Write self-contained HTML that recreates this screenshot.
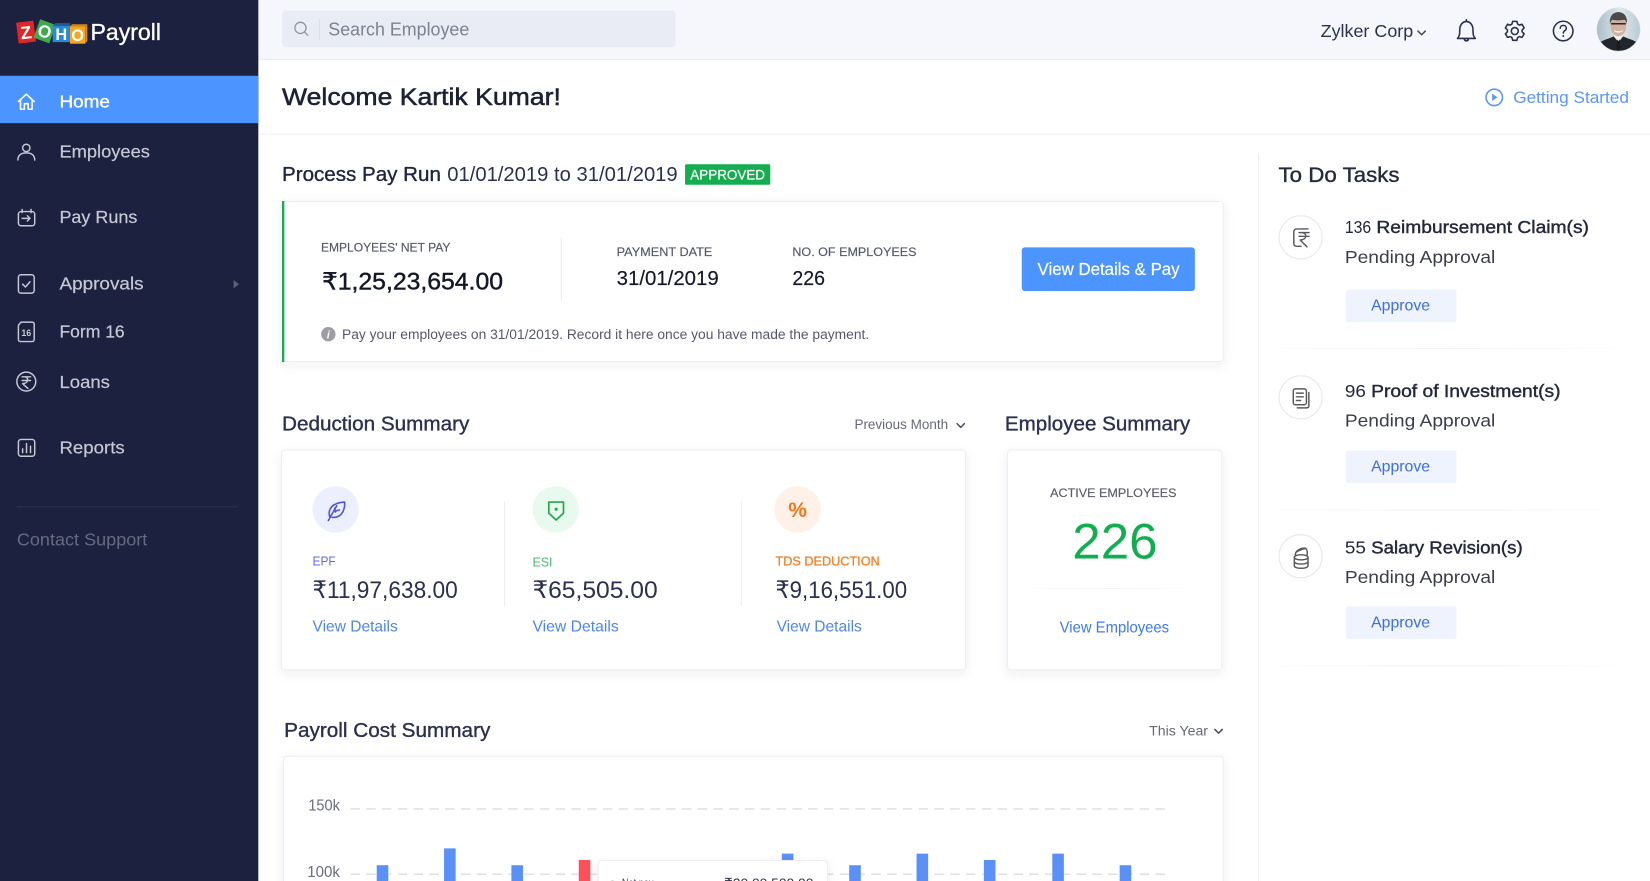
<!DOCTYPE html>
<html lang="en">
<head>
<meta charset="utf-8">
<title>Zoho Payroll</title>
<style>
html,body{margin:0;padding:0;background:#fff;width:1650px;height:881px;overflow:hidden}
svg{display:block;width:1650px;height:881px}
text{font-family:"Liberation Sans","DejaVu Sans",sans-serif;white-space:pre}
.nav{font-size:17px;fill:#c6c8d3;stroke:#c6c8d3;stroke-width:.2px}
.lbl{font-size:11.5px;fill:#55586a;stroke:#55586a;stroke-width:.15px}
.link{font-size:15px;fill:#4f86ea}
.ttl{font-size:17px;fill:#24283c}
.sec{font-size:19.5px;fill:#2b3050;stroke:#2b3050;stroke-width:.35px}
.amt{font-size:23px;fill:#2b3050}
.ap{font-size:15px;fill:#3f6fd8}
.ic{fill:none;stroke:#c6c8d3;stroke-width:1.4;stroke-linecap:round;stroke-linejoin:round}
.ti{fill:none;stroke:#5a5a5e;stroke-width:1.4;stroke-linecap:round;stroke-linejoin:round}
.hd{fill:none;stroke:#2b3050;stroke-width:1.5;stroke-linecap:round;stroke-linejoin:round}
.ch{fill:none;stroke:#44485a;stroke-width:1.4;stroke-linecap:round;stroke-linejoin:round}
</style>
</head>
<body>
<svg viewBox="0 0 1568 837" preserveAspectRatio="none" xmlns="http://www.w3.org/2000/svg">
<defs>
<filter id="sh" x="-5%" y="-10%" width="110%" height="125%"><feDropShadow dx="0" dy="3" stdDeviation="5" flood-color="#30385a" flood-opacity=".07"/></filter>
<linearGradient id="fade" x1="0" x2="1" y1="0" y2="0"><stop offset="0" stop-color="#f0f1f4" stop-opacity=".3"/><stop offset=".5" stop-color="#eff0f3"/><stop offset="1" stop-color="#f0f1f4" stop-opacity=".1"/></linearGradient>
<linearGradient id="av" x1="0" x2="1" y1="0" y2="0"><stop offset="0" stop-color="#a9bcc7"/><stop offset=".55" stop-color="#dfe8ec"/><stop offset="1" stop-color="#b9cad3"/></linearGradient>
<clipPath id="avc"><circle cx="1538" cy="28" r="20.6"/></clipPath>
</defs>
<rect width="1568" height="837" fill="#fff"/>

<!-- Top bar -->
<rect x="245" y="0" width="1323" height="56" fill="#f5f7fc"/>
<rect x="245" y="56" width="1323" height="1" fill="#eceef4"/>
<rect x="268" y="10" width="374" height="35" rx="4" fill="#e9ecf4"/>
<circle cx="285.500" cy="26.500" r="5.300" fill="none" stroke="#8d93a3" stroke-width="1.200"/>
<path d="M289.500 30.500l3 3" stroke="#8d93a3" stroke-width="1.200" stroke-linecap="round"/>
<rect x="303" y="18" width="1" height="20" fill="#d8dce6"/>
<text x="312" y="33.500" font-size="17.500" fill="#7d8290" textLength="134" lengthAdjust="spacingAndGlyphs">Search Employee</text>
<text x="1255" y="35" font-size="17" fill="#2b3050" textLength="88" lengthAdjust="spacingAndGlyphs">Zylker Corp</text>
<path class="ch" d="M1347.500 29.500l3.500 3.500 3.500-3.500"/>
<path class="hd" d="M1385 36.500c2-2 2.200-4 2.200-8 0-4.500 2.500-8 6.300-8s6.300 3.500 6.300 8c0 4 .2 6 2.200 8zM1391.500 36.800c.3 2.600 3.700 2.600 4 0M1393.500 20.500v-1.800"/>
<g class="hd" transform="translate(1439.500 29.500)">
<circle r="3.300"/>
<path d="M-2-9.200h4l.7 2.600 1.600.9 2.600-.7 2 3.400-1.900 1.900v1.800l1.900 1.900-2 3.400-2.600-.7-1.600.9-.7 2.600h-4l-.7-2.600-1.600-.9-2.600.7-2-3.400 1.900-1.900v-1.800l-1.900-1.900 2-3.400 2.600.7 1.600-.9z"/>
</g>
<circle class="hd" cx="1485.500" cy="29.500" r="9.300"/>
<path class="hd" d="M1482.700 26.800c0-3.600 5.800-3.600 5.800 0 0 2.200-2.900 2.400-2.900 4.600"/>
<circle cx="1485.600" cy="34.200" r=".9" fill="#2b3050"/>
<g clip-path="url(#avc)">
<rect x="1517" y="7" width="42" height="42" fill="url(#av)"/>
<path d="M1521 49v-9c3-2.500 9-3.500 12.500-5.500h9c3.500 2 9.500 3 12.500 5.500v9z" fill="#23252c"/>
<path d="M1533.500 34.500l4.500 5.500 4.500-5.500-1-2h-7z" fill="#f1f1f1"/>
<path d="M1536.800 37.500l1.200 1.500 1.200-1.500 1 9.500h-4.400z" fill="#1b1b20"/>
<ellipse cx="1538" cy="24.500" rx="7.500" ry="10" fill="#d3b3a0"/>
<path d="M1530 23c-1-7 2.500-11.500 8-11.500s9 4.500 8 11.500c-.6-2.500-1.400-3.800-2.400-4.200-3.600.8-7.600.8-11.200 0-1 .4-1.800 1.700-2.400 4.200z" fill="#4b4a4a"/>
<rect x="1531" y="21.800" width="14" height="1.500" fill="#2c2a2c"/>
<path d="M1533.500 28.500c3 1.500 6 1.500 9 0-.8 3.400-8.200 3.400-9 0z" fill="#f6f1ed"/>
</g>
<circle cx="1538" cy="28" r="20.600" fill="none" stroke="#d8dbe2" stroke-width=".5"/>

<!-- Sidebar -->
<rect x="0" y="0" width="245.500" height="837" fill="#1c2140"/>
<rect x="0" y="72" width="245.500" height="45" fill="#4c94ff"/>

<rect x="16.500" y="20.500" width="16.500" height="20" fill="#e42527" transform="rotate(-7 24.700 30.500)"/>
<text x="24.700" y="36.800" font-size="17" font-weight="700" fill="#fff" text-anchor="middle" transform="rotate(-7 24.700 30.500)">Z</text>
<rect x="34.500" y="20.500" width="16" height="18.500" fill="#3dab4b" transform="rotate(20 42.500 29.700)"/>
<text x="42.500" y="35.700" font-size="16.500" font-weight="700" fill="#fff" text-anchor="middle" transform="rotate(18 42.500 29.700)">O</text>
<rect x="50" y="24.500" width="16.500" height="15.500" fill="#2a8ad2"/>
<path d="M50 24.500l2.500-2.500h14.500l-.5 2.500z" fill="#1d5d98"/>
<text x="58.200" y="38" font-size="15.500" font-weight="700" fill="#fff" text-anchor="middle">H</text>
<rect x="66.500" y="25" width="14.500" height="16.500" fill="#f5a71f"/>
<path d="M66.500 25l2-2h14.500l-2 2z" fill="#d48a14"/>
<path d="M81 25l2-2v16l-2 2.500z" fill="#d48a14"/>
<text x="73.700" y="39" font-size="15.500" font-weight="700" fill="#fff" text-anchor="middle">O</text>
<text x="86" y="38" font-size="22" fill="#fff" stroke="#fff" stroke-width=".3" textLength="67" lengthAdjust="spacingAndGlyphs">Payroll</text>

<path fill="none" stroke="#fff" stroke-width="1.500" stroke-linecap="round" stroke-linejoin="round" d="M17.500 96.500L25 89.500l7.500 7M19.500 95v8.800h3.700V98.500h3.600v5.300h3.700V95"/>
<text x="56.500" y="102" class="nav" style="fill:#fff;stroke:#fff;stroke-width:.35px" textLength="48" lengthAdjust="spacingAndGlyphs">Home</text>

<circle class="ic" cx="25" cy="140.500" r="3.500"/>
<path class="ic" d="M17 152c0-4.500 3-6.800 8-6.800s8 2.300 8 6.800"/>
<text x="56.500" y="149.500" class="nav" textLength="86" lengthAdjust="spacingAndGlyphs">Employees</text>

<rect class="ic" x="17.500" y="201" width="15.500" height="13.500" rx="2.500"/>
<path class="ic" d="M21 199v3M29.500 199v3M21 207.500h7.500M26 205l2.500 2.500-2.500 2.500"/>
<text x="56.500" y="212" class="nav" textLength="74" lengthAdjust="spacingAndGlyphs">Pay Runs</text>

<rect class="ic" x="17.500" y="261" width="15" height="17.500" rx="2.500"/>
<path class="ic" d="M21.500 270l2.700 2.700 4.300-5"/>
<text x="56.500" y="275" class="nav" textLength="80" lengthAdjust="spacingAndGlyphs">Approvals</text>
<path d="M222 266l5 4-5 4z" fill="#5e6277"/>

<path class="ic" d="M20 306h10.500a2 2 0 0 1 2 2v14.500a2 2 0 0 1-2 2h-11a2 2 0 0 1-2-2V309z"/>
<text x="25" y="319" font-size="8.500" font-weight="700" fill="#c6c8d3" text-anchor="middle">16</text>
<text x="56.500" y="320.500" class="nav" textLength="62" lengthAdjust="spacingAndGlyphs">Form 16</text>

<circle class="ic" cx="25" cy="362.500" r="9"/>
<path class="ic" d="M21 358h8M21 361.500h8M23.500 358c4 0 4 6.500-2 6.500l5 4.500"/>
<text x="56.500" y="368.500" class="nav" textLength="48" lengthAdjust="spacingAndGlyphs">Loans</text>

<rect class="ic" x="17.500" y="417.500" width="15.500" height="16" rx="2.500"/>
<path class="ic" d="M21.500 430v-3.500M25.200 430v-8.500M29 430v-6"/>
<text x="56.500" y="431" class="nav" textLength="62" lengthAdjust="spacingAndGlyphs">Reports</text>

<rect x="16" y="481" width="210" height="1" fill="#2b304d"/>
<text x="16" y="518.500" font-size="16.500" fill="#666a80" textLength="124" lengthAdjust="spacingAndGlyphs">Contact Support</text>

<!-- Welcome row -->
<text x="268" y="100" font-size="23" fill="#1c2136" stroke="#1c2136" stroke-width=".5" textLength="265" lengthAdjust="spacingAndGlyphs">Welcome Kartik Kumar!</text>
<circle cx="1420" cy="92.500" r="7.800" fill="none" stroke="#5b96f7" stroke-width="1.500"/>
<path d="M1418 89v7l5-3.500z" fill="#5b96f7"/>
<text x="1438" y="98" font-size="16" fill="#5b96f7" textLength="110" lengthAdjust="spacingAndGlyphs">Getting Started</text>
<rect x="245.500" y="127" width="1323" height="1" fill="#eeeff2"/>
<rect x="1195.500" y="146" width="1" height="691" fill="#eff0f3"/>

<!-- Process Pay Run -->
<text x="268" y="172" class="sec" style="fill:#1f2440;stroke:#1f2440" textLength="151" lengthAdjust="spacingAndGlyphs">Process Pay Run</text>
<text x="425" y="172" font-size="19.500" fill="#2b3050" textLength="219" lengthAdjust="spacingAndGlyphs">01/01/2019 to 31/01/2019</text>
<rect x="651" y="156" width="81" height="19.500" rx="1" fill="#14ad4f"/>
<text x="656" y="170.500" font-size="13" fill="#fff" stroke="#fff" stroke-width=".2" textLength="71" lengthAdjust="spacingAndGlyphs">APPROVED</text>

<rect x="268.500" y="191.500" width="894" height="152" rx="3" fill="#fff" stroke="#eeeef2" filter="url(#sh)"/>
<rect x="268" y="191" width="2.200" height="153" fill="#14ad4f"/>
<text x="305" y="239" class="lbl" textLength="123" lengthAdjust="spacingAndGlyphs">EMPLOYEES' NET PAY</text>
<text x="306" y="275" font-size="22.500" fill="#14172a" stroke="#14172a" stroke-width=".4" textLength="172" lengthAdjust="spacingAndGlyphs">₹1,25,23,654.00</text>
<rect x="533" y="226" width="1" height="60" fill="#eceef2"/>
<text x="586" y="243" class="lbl" textLength="91" lengthAdjust="spacingAndGlyphs">PAYMENT DATE</text>
<text x="586" y="271" font-size="19.500" fill="#14172a" stroke="#14172a" stroke-width=".15" textLength="97" lengthAdjust="spacingAndGlyphs">31/01/2019</text>
<text x="753" y="243" class="lbl" textLength="118" lengthAdjust="spacingAndGlyphs">NO. OF EMPLOYEES</text>
<text x="753" y="271" font-size="19.500" fill="#14172a" stroke="#14172a" stroke-width=".15" textLength="31" lengthAdjust="spacingAndGlyphs">226</text>
<rect x="971" y="235" width="164.500" height="41.500" rx="3" fill="#4c94ff"/>
<text x="986" y="261.500" font-size="16.500" fill="#fff" stroke="#fff" stroke-width=".2" textLength="135" lengthAdjust="spacingAndGlyphs">View Details &amp; Pay</text>
<circle cx="312" cy="317.500" r="6.800" fill="#9c9ea4"/>
<text x="312" y="321.500" font-size="10.500" font-weight="700" font-style="italic" fill="#fff" text-anchor="middle">i</text>
<text x="325" y="322" font-size="13.500" fill="#55586a" textLength="501" lengthAdjust="spacingAndGlyphs">Pay your employees on 31/01/2019. Record it here once you have made the payment.</text>

<!-- Deduction Summary -->
<text x="268" y="409" class="sec" textLength="178" lengthAdjust="spacingAndGlyphs">Deduction Summary</text>
<text x="812" y="407.500" font-size="13" fill="#666a75" textLength="89" lengthAdjust="spacingAndGlyphs">Previous Month</text>
<path class="ch" d="M909.500 402.500l3.500 3.500 3.500-3.500"/>
<text x="955" y="409" class="sec" textLength="176" lengthAdjust="spacingAndGlyphs">Employee Summary</text>

<rect x="267.500" y="427.500" width="650" height="209" rx="3" fill="#fff" stroke="#eeeef2" filter="url(#sh)"/>
<circle cx="319" cy="484" r="22" fill="#eceffe"/>
<path d="M313.500 491.500C311 484 315.500 477.500 327.500 477c.5 9-4 15.500-12 14.500M312 494.500l8-14M318.800 486.500l-.8-3.500M319 485.500l3.500-1" fill="none" stroke="#4a55e0" stroke-width="1.500" stroke-linecap="round" stroke-linejoin="round"/>
<circle cx="528" cy="484" r="22" fill="#e8f9ee"/>
<path d="M521.500 477h14v10.500l-7 6.500-7-6.500z" fill="none" stroke="#22a84a" stroke-width="1.600" stroke-linejoin="round"/>
<circle cx="528.500" cy="483.800" r="1.500" fill="#22a84a"/>
<circle cx="758" cy="484" r="22" fill="#fff1e8"/>
<text x="758" y="491" font-size="20" font-weight="700" fill="#f5761a" text-anchor="middle">%</text>
<rect x="479" y="476" width="1" height="100" fill="#eceef2"/>
<rect x="704" y="476" width="1" height="100" fill="#eceef2"/>
<text x="297" y="537.500" font-size="12" fill="#5f6af0" textLength="22" lengthAdjust="spacingAndGlyphs">EPF</text>
<text x="506" y="538" font-size="12" fill="#4bb874" textLength="19" lengthAdjust="spacingAndGlyphs">ESI</text>
<text x="737" y="537.500" font-size="12" fill="#f57f20" stroke="#f57f20" stroke-width=".25" textLength="99" lengthAdjust="spacingAndGlyphs">TDS DEDUCTION</text>
<text x="297" y="568" class="amt" textLength="138" lengthAdjust="spacingAndGlyphs">₹11,97,638.00</text>
<text x="506" y="568" class="amt" textLength="119" lengthAdjust="spacingAndGlyphs">₹65,505.00</text>
<text x="737" y="568" class="amt" textLength="125" lengthAdjust="spacingAndGlyphs">₹9,16,551.00</text>
<text x="297" y="600" class="link" textLength="81" lengthAdjust="spacingAndGlyphs">View Details</text>
<text x="506" y="600" class="link" textLength="82" lengthAdjust="spacingAndGlyphs">View Details</text>
<text x="738" y="600" class="link" textLength="81" lengthAdjust="spacingAndGlyphs">View Details</text>

<!-- Employee Summary -->
<rect x="957.500" y="427.500" width="203.500" height="209" rx="3" fill="#fff" stroke="#eeeef2" filter="url(#sh)"/>
<text x="998" y="472" class="lbl" style="fill:#5a5d6b;stroke:#5a5d6b" textLength="120" lengthAdjust="spacingAndGlyphs">ACTIVE EMPLOYEES</text>
<text x="1019" y="530.500" font-size="48" fill="#0fae4e" textLength="81" lengthAdjust="spacingAndGlyphs">226</text>
<rect x="983" y="558.500" width="147" height="1" fill="url(#fade)"/>
<text x="1007" y="601" class="link" style="fill:#3f7be8" textLength="104" lengthAdjust="spacingAndGlyphs">View Employees</text>

<!-- To Do -->
<text x="1215" y="173" font-size="20.500" fill="#24283c" stroke="#24283c" stroke-width=".35" textLength="115" lengthAdjust="spacingAndGlyphs">To Do Tasks</text>

<circle cx="1236" cy="225.500" r="20.500" fill="#fff" stroke="#e7e7ea" stroke-width="1"/>
<path class="ti" d="M1243 217.500h-10.500q-3 0-3 3v11q0 2.500 3 2.500h4M1234.500 221h9.500M1234.500 224.500h9.500M1237 221c5.500 0 5.500 7-1.500 7l6.500 6.500"/>
<text x="1278" y="221.500" class="ttl" textLength="25" lengthAdjust="spacingAndGlyphs">136</text>
<text x="1308" y="221.500" class="ttl" stroke="#24283c" stroke-width=".4" textLength="202" lengthAdjust="spacingAndGlyphs">Reimbursement Claim(s)</text>
<text x="1278" y="250" class="ttl" style="fill:#3a3d4a" textLength="143" lengthAdjust="spacingAndGlyphs">Pending Approval</text>
<rect x="1279" y="275" width="105" height="31" rx="2" fill="#eef3fd"/>
<text x="1303" y="295" class="ap" textLength="56" lengthAdjust="spacingAndGlyphs">Approve</text>
<rect x="1215" y="330.500" width="330" height="1" fill="url(#fade)"/>

<circle cx="1236" cy="377.500" r="20.500" fill="#fff" stroke="#e7e7ea" stroke-width="1"/>
<rect class="ti" x="1229" y="369.500" width="12.500" height="15" rx="2"/>
<path class="ti" d="M1232 373.500h6.500M1232 377h6.500M1232 380.500h4M1243.800 373v12.500q0 2-2 2h-9"/>
<text x="1278" y="377" class="ttl" textLength="20" lengthAdjust="spacingAndGlyphs">96</text>
<text x="1303" y="377" class="ttl" stroke="#24283c" stroke-width=".4" textLength="180" lengthAdjust="spacingAndGlyphs">Proof of Investment(s)</text>
<text x="1278" y="405" class="ttl" style="fill:#3a3d4a" textLength="143" lengthAdjust="spacingAndGlyphs">Pending Approval</text>
<rect x="1279" y="428" width="105" height="31" rx="2" fill="#eef3fd"/>
<text x="1303" y="448" class="ap" textLength="56" lengthAdjust="spacingAndGlyphs">Approve</text>
<rect x="1215" y="484" width="330" height="1" fill="url(#fade)"/>

<circle cx="1236" cy="528.500" r="20.500" fill="#fff" stroke="#e7e7ea" stroke-width="1"/>
<path class="ti" d="M1230 533.500v4c0 3.200 13 3.200 13 0v-8M1230 533.500c0 3.200 13 3.200 13 0M1230 529.500v4M1230 529.500c0 3.200 13 3.200 13 0s-13-3.200-13 0zM1231 528c-1-5 6-8 10-7 1.500 2 1.500 5 1 7M1232 524.500c3-2 6-3 9-3.500"/>
<text x="1278" y="526" class="ttl" textLength="20" lengthAdjust="spacingAndGlyphs">55</text>
<text x="1303" y="526" class="ttl" stroke="#24283c" stroke-width=".4" textLength="144" lengthAdjust="spacingAndGlyphs">Salary Revision(s)</text>
<text x="1278" y="554" class="ttl" style="fill:#3a3d4a" textLength="143" lengthAdjust="spacingAndGlyphs">Pending Approval</text>
<rect x="1279" y="576" width="105" height="31" rx="2" fill="#eef3fd"/>
<text x="1303" y="596" class="ap" textLength="56" lengthAdjust="spacingAndGlyphs">Approve</text>
<rect x="1215" y="632" width="330" height="1" fill="url(#fade)"/>

<!-- Payroll Cost Summary -->
<text x="270" y="700" class="sec" textLength="196" lengthAdjust="spacingAndGlyphs">Payroll Cost Summary</text>
<text x="1092" y="699" font-size="13" fill="#666a75" textLength="56" lengthAdjust="spacingAndGlyphs">This Year</text>
<path class="ch" d="M1154.500 693l3.500 3.500 3.500-3.500"/>
<rect x="269.500" y="718.500" width="893" height="140" rx="3" fill="#fff" stroke="#eeeef2" filter="url(#sh)"/>
<text x="293" y="770" font-size="14.500" fill="#6a6d78" textLength="30" lengthAdjust="spacingAndGlyphs">150k</text>
<text x="292" y="833" font-size="14.500" fill="#6a6d78" textLength="31" lengthAdjust="spacingAndGlyphs">100k</text>
<path d="M333 768.500H1112M333 830.500H1112" stroke="#dcdde2" stroke-width="1.300" stroke-dasharray="9 6"/>
<g fill="#5a90f8">
<rect x="358" y="822" width="11" height="20"/>
<rect x="422" y="806" width="11" height="36"/>
<rect x="486" y="822" width="11" height="20"/>
<rect x="743" y="811" width="11" height="30"/>
<rect x="807" y="822" width="11" height="20"/>
<rect x="871" y="811" width="11" height="30"/>
<rect x="935" y="817" width="11" height="25"/>
<rect x="1000" y="811" width="11" height="30"/>
<rect x="1064" y="822" width="11" height="20"/>
</g>
<rect x="550" y="817" width="11" height="25" fill="#ff5059"/>
<rect x="568.500" y="817.500" width="218" height="40" rx="3" fill="#fff" stroke="#efeff2" filter="url(#sh)"/>
<circle cx="582" cy="840" r="3" fill="none" stroke="#7fd4a3"/>
<text x="591" y="843" font-size="12.500" fill="#44485a" textLength="30" lengthAdjust="spacingAndGlyphs">Net pay</text>
<text x="688" y="843" font-size="12.500" fill="#2b3050" textLength="85" lengthAdjust="spacingAndGlyphs">₹20,00,500.00</text>
</svg>
</body>
</html>
